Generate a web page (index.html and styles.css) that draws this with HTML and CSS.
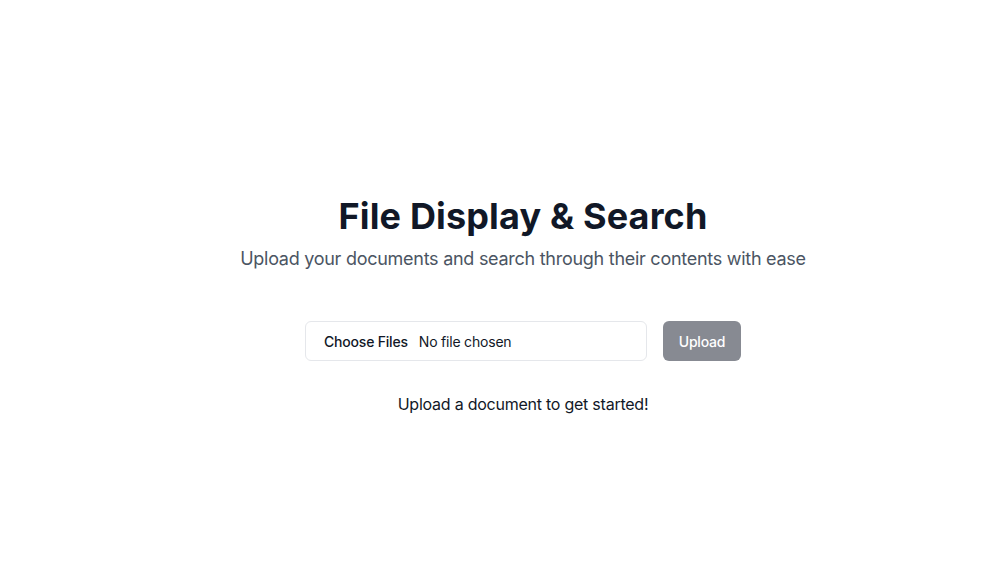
FILE: index.html
```html
<!DOCTYPE html>
<html lang="en">
<head>
<meta charset="utf-8">
<title>File Display &amp; Search</title>
<link rel="stylesheet" href="styles.css">
</head>
<body>
<main class="page">
  <h1 class="title">File Display &amp; Search</h1>
  <p class="subtitle">Upload your documents and search through their contents with ease</p>
  <form class="upload-row">
    <label class="file-input">
      <span class="file-button">Choose Files</span>
      <span class="file-name">No file chosen</span>
    </label>
    <button type="button" class="upload-btn" disabled>Upload</button>
  </form>
  <p class="empty">Upload a document to get started!</p>
</main>
</body>
</html>
```

FILE: styles.css
```css
* { box-sizing: border-box; }
html, body { margin: 0; padding: 0; background: #ffffff; }
body {
  font-family: "Inter", "Noto Sans", sans-serif;
  color: #111827;
}
.page {
  display: flex;
  flex-direction: column;
  align-items: center;
  padding: 196px 0 0 38px;
}
.title {
  margin: 0 0 9px;
  font-size: 36px;
  line-height: 40px;
  font-weight: 700;
  color: #111827;
  letter-spacing: 0.15px;
}
.subtitle {
  margin: 0 0 48px;
  font-size: 18px;
  line-height: 28px;
  color: #4b5563;
  letter-spacing: -0.27px;
}
.upload-row {
  display: flex;
  gap: 16px;
  align-items: center;
  margin: 0;
}
.file-input {
  display: flex;
  align-items: center;
  width: 342px;
  height: 40px;
  border: 1px solid #e5e7eb;
  border-radius: 6px;
  padding-left: 18px;
  font-size: 14px;
  color: #111827;
  background: #fff;
  letter-spacing: -0.2px;
}
.file-button {
  font-weight: 500;
  margin-right: 11px;
}
.file-name { font-weight: 400; }
.upload-btn {
  width: 78px;
  height: 40px;
  padding: 0;
  border: none;
  border-radius: 6px;
  background: #111827;
  opacity: 0.5;
  color: #ffffff;
  font-family: inherit;
  font-size: 14px;
  font-weight: 500;
  letter-spacing: -0.2px;
}
.empty {
  margin: 31px 0 0;
  font-size: 16px;
  line-height: 24px;
  color: #111827;
  letter-spacing: -0.24px;
}
```
